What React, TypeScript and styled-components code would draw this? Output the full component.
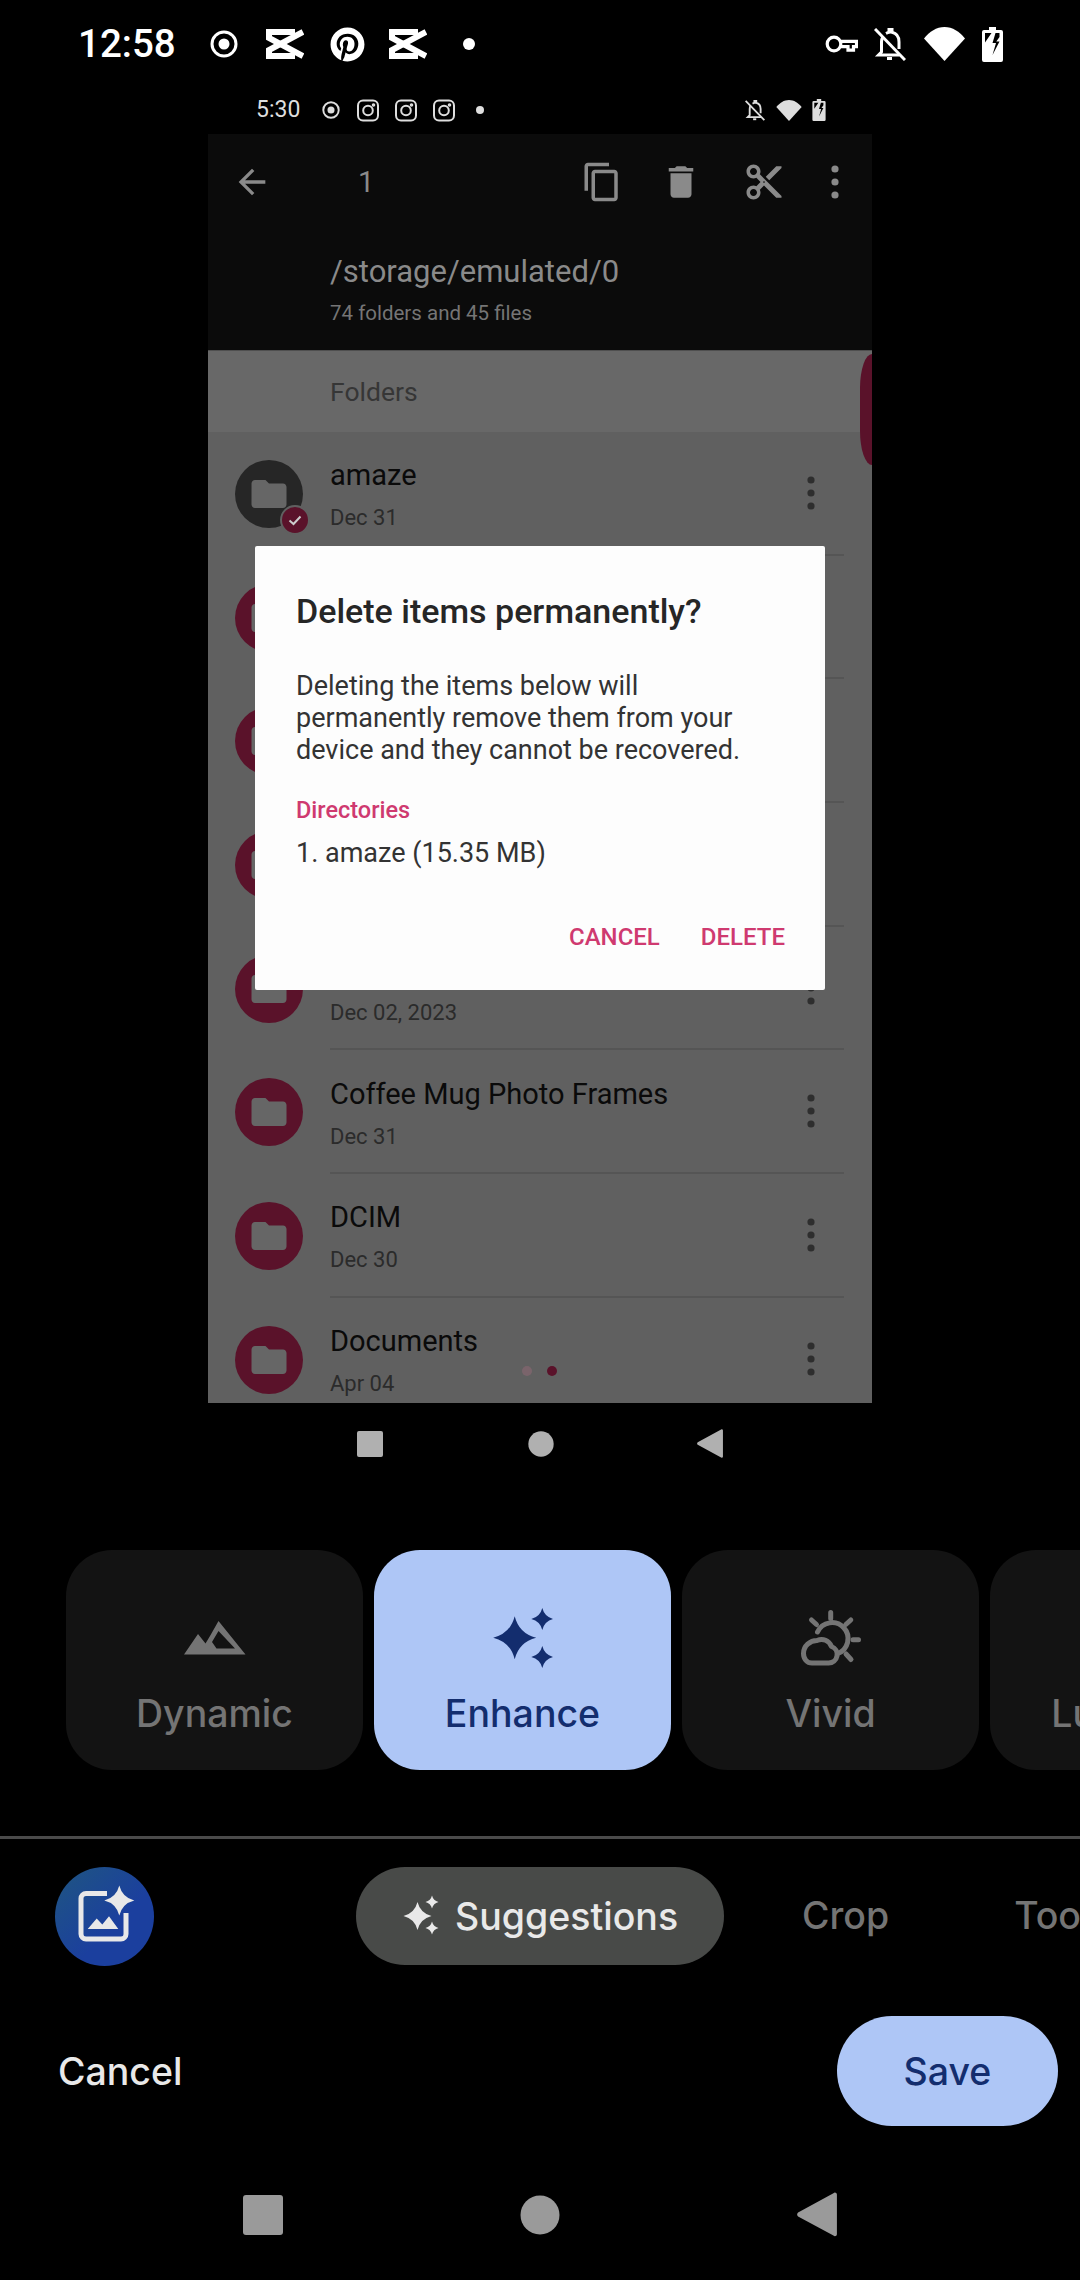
import React from 'react'
import styled, { createGlobalStyle } from 'styled-components'

const GlobalStyle = createGlobalStyle`
  html, body {
    margin: 0;
    padding: 0;
    background: #000;
    font-family: Roboto, "Liberation Sans", sans-serif;
  }
`

const Page = styled.div`
  width: 1080px;
  height: 2280px;
  background: #000;
  overflow: hidden;
  display: flex;
  flex-direction: column;
`

const StatusBar = styled.div`
  height: 88px;
  flex: none;
  display: flex;
  align-items: center;
  justify-content: space-between;
  padding: 0 77px 0 78px;
  color: #fff;
`
const StatusGroup = styled.div`
  display: flex;
  align-items: center;
`
const Clock = styled.span`
  font-size: 38.5px;
  font-weight: 500;
  line-height: 44px;
`
const Slot = styled.span<{ $ml?: number }>`
  display: flex;
  margin-left: ${p => p.$ml || 0}px;
`
const StatusDot = styled.span<{ $size: number; $ml: number }>`
  width: ${p => p.$size}px;
  height: ${p => p.$size}px;
  margin-left: ${p => p.$ml}px;
  border-radius: 50%;
  background: currentColor;
`

const Shot = styled.div`
  width: 664px;
  flex: none;
  margin: 0 auto;
`
const ShotStatus = styled.div`
  height: 46px;
  display: flex;
  align-items: center;
  justify-content: space-between;
  padding: 0 46px 2px 48px;
  box-sizing: border-box;
  color: #dedede;
`
const ShotClock = styled.span`
  font-size: 23px;
  line-height: 28px;
`
const Screen = styled.div`
  position: relative;
  height: 1269px;
  background: #606060;
  overflow: hidden;
`
const AppBar = styled.div`
  height: 217px;
  background: #0b0b0b;
  border-bottom: 1px solid #4f4f4f;
  box-sizing: border-box;
  color: #8a8a8a;
`
const ActionRow = styled.div`
  height: 96px;
  display: flex;
  align-items: center;
  padding-left: 24px;
`
const SelectCount = styled.span`
  font-size: 29px;
  margin-left: 86px;
  margin-right: 207px;
`
const PathText = styled.div`
  margin: 22px 0 0 122px;
  font-size: 31px;
  line-height: 40px;
`
const PathSub = styled.div`
  margin: 7px 0 0 122px;
  font-size: 20.5px;
  line-height: 28px;
  color: #757575;
`
const SectionHead = styled.div`
  height: 81px;
  display: flex;
  align-items: center;
  padding-left: 122px;
  background: #686868;
  font-size: 26.5px;
  color: #363636;
`
const Row = styled.div`
  height: 123.7px;
  display: flex;
  align-items: center;
  padding-left: 27px;
`
const FolderBadge = styled.div<{ $picked?: boolean }>`
  position: relative;
  width: 68px;
  height: 68px;
  flex: none;
  border-radius: 50%;
  display: flex;
  align-items: center;
  justify-content: center;
  background: ${p => (p.$picked ? '#262626' : '#5a122a')};
`
const CheckBadge = styled.span`
  position: absolute;
  right: -7px;
  bottom: -7px;
  width: 26px;
  height: 26px;
  border-radius: 50%;
  background: #5a122a;
  border: 2px solid #606060;
  display: flex;
  align-items: center;
  justify-content: center;
`
const RowBody = styled.div`
  flex: 1;
  height: 100%;
  margin: 0 28px 0 27px;
  display: flex;
  align-items: center;
  justify-content: space-between;
  padding-right: 21px;
  border-bottom: 2px solid #555;
  box-sizing: border-box;
`
const RowText = styled.div`
  padding-top: 3px;
`
const RowTitle = styled.div`
  height: 40px;
  line-height: 40px;
  font-size: 29px;
  color: #0a0a0a;
`
const RowDate = styled.div`
  margin-top: 8px;
  line-height: 30px;
  font-size: 22px;
  color: #2b2b2b;
`
const ScrollGrip = styled.div`
  position: absolute;
  top: 220px;
  right: 0;
  width: 12px;
  height: 111px;
  background: #5a122a;
  border-radius: 12px 0 0 12px / 34px 0 0 34px;
`
const PagerDots = styled.div`
  position: absolute;
  left: 314px;
  bottom: 27px;
  display: flex;
  gap: 15px;
`
const PagerDot = styled.span<{ $on?: boolean }>`
  width: 10px;
  height: 10px;
  border-radius: 50%;
  background: ${p => (p.$on ? '#5a122a' : '#7a646b')};
`

const Dialog = styled.div`
  position: absolute;
  top: 412px;
  left: 47px;
  width: 570px;
  height: 444px;
  background: #fdfdfd;
  border-radius: 2px;
  box-sizing: border-box;
  padding: 45px 40px 38px 41px;
  display: flex;
  flex-direction: column;
`
const DialogTitle = styled.div`
  font-size: 34px;
  font-weight: 500;
  line-height: 40px;
  color: #262626;
`
const DialogBody = styled.div`
  margin-top: 39px;
  font-size: 27px;
  line-height: 32px;
  color: #333;
`
const DialogLabel = styled.div`
  margin-top: 29px;
  font-size: 23.5px;
  font-weight: 500;
  line-height: 30px;
  color: #cf3a70;
`
const DialogItem = styled.div`
  margin-top: 10px;
  font-size: 27px;
  line-height: 36px;
  color: #333;
`
const DialogActions = styled.div`
  margin-top: auto;
  display: flex;
  justify-content: flex-end;
  gap: 41px;
`
const DialogButton = styled.span`
  font-size: 24px;
  font-weight: 500;
  line-height: 30px;
  color: #cf3a70;
`

const NavBar = styled.div<{ $height: number; $top?: number; $offset?: number }>`
  height: ${p => p.$height}px;
  margin-top: ${p => p.$top || 0}px;
  padding-top: ${p => p.$offset || 0}px;
  box-sizing: border-box;
  flex: none;
  display: flex;
  align-items: center;
  justify-content: center;
`

const CardRow = styled.div`
  margin-top: 67px;
  height: 220px;
  flex: none;
  display: flex;
  gap: 11px;
  padding-left: 66px;
  overflow: hidden;
`
const Card = styled.div<{ $on?: boolean }>`
  width: 297px;
  height: 220px;
  flex: none;
  border-radius: 46px;
  padding-top: 58px;
  box-sizing: border-box;
  display: flex;
  flex-direction: column;
  align-items: center;
  background: ${p => (p.$on ? '#aec6f6' : '#131313')};
  color: ${p => (p.$on ? '#132d6e' : '#747474')};
`
const CardIcon = styled.div`
  height: 60px;
  display: flex;
  align-items: center;
  justify-content: center;
`
const CardLabel = styled.div`
  margin-top: 22px;
  font-family: Inter, Roboto, sans-serif;
  font-size: 37.5px;
  font-weight: 500;
  line-height: 48px;
`

const Divider = styled.div`
  margin-top: 66px;
  height: 3px;
  flex: none;
  background: #4a4a4a;
`
const TabRow = styled.div`
  margin-top: 28px;
  height: 99px;
  flex: none;
  display: flex;
  align-items: flex-start;
  padding-left: 55px;
  overflow: hidden;
  white-space: nowrap;
  font-family: Inter, Roboto, sans-serif;
  font-weight: 500;
`
const MagicButton = styled.div`
  width: 99px;
  height: 99px;
  flex: none;
  border-radius: 50%;
  background: linear-gradient(135deg, #1f5680, #1b3f9e 60%);
  display: flex;
`
const ActiveTab = styled.div`
  margin-left: 202px;
  width: 368px;
  height: 98px;
  flex: none;
  box-sizing: border-box;
  padding-left: 47px;
  border-radius: 49px;
  background: #484a48;
  display: flex;
  align-items: center;
  gap: 14px;
  color: #e9e9e9;
  font-size: 37.5px;
`
const Tab = styled.div<{ $ml: number }>`
  margin-left: ${p => p.$ml}px;
  flex: none;
  height: 98px;
  line-height: 98px;
  font-size: 37.5px;
  color: #747474;
`
const FooterRow = styled.div`
  margin-top: 50px;
  height: 110px;
  flex: none;
  display: flex;
  align-items: center;
  justify-content: space-between;
  padding: 0 22px 0 58px;
  font-family: Inter, Roboto, sans-serif;
  font-size: 37.5px;
  font-weight: 500;
`
const CancelText = styled.span`
  color: #e9e9e9;
`
const SaveButton = styled.div`
  width: 221px;
  height: 110px;
  border-radius: 55px;
  background: #aec6f6;
  color: #132d6e;
  display: flex;
  align-items: center;
  justify-content: center;
`

// four pointed star centred on cx,cy
const star = (cx: number, cy: number, r: number) => {
  const k = r * 0.2
  return `M${cx} ${cy - r}Q${cx + k} ${cy - k} ${cx + r} ${cy}Q${cx + k} ${cy + k} ${cx} ${cy + r}Q${cx - k} ${cy + k} ${cx - r} ${cy}Q${cx - k} ${cy - k} ${cx} ${cy - r}Z`
}

const TargetIcon = ({ size }: { size: number }) => (
  <svg width={size} height={size} viewBox="0 0 28 28" fill="none">
    <circle cx="14" cy="14" r="12" stroke="currentColor" strokeWidth="3" />
    <circle cx="14" cy="14" r="5.5" fill="currentColor" />
  </svg>
)

const CapCutIcon = () => (
  <svg width="38" height="30" viewBox="0 0 38 30" fill="none" stroke="currentColor" strokeWidth="6">
    <path d="M37 3 3 21v6h26" />
    <path d="M37 27 3 9V3h26" />
  </svg>
)

const PinterestIcon = () => (
  <svg width="35" height="35" viewBox="0 0 496 512" fill="currentColor">
    <path d="M496 256c0 137-111 248-248 248-25.600 0-50.200-3.900-73.400-11.100 10.100-16.500 25.200-43.500 30.800-65 3-11.600 15.400-59 15.400-59 8.100 15.400 31.700 28.500 56.800 28.500 74.800 0 128.700-68.800 128.700-154.300 0-81.900-66.900-143.200-152.900-143.200-107 0-163.900 71.800-163.900 150.100 0 36.400 19.400 81.700 50.300 96.100 4.700 2.200 7.200 1.200 8.300-3.300.8-3.400 5-20.300 6.900-28.100.6-2.500.3-4.700-1.700-7.100-10.100-12.500-18.300-35.300-18.300-56.600 0-54.700 41.400-107.600 112-107.600 60.900 0 103.600 41.500 103.600 100.900 0 67.100-33.900 113.600-78 113.600-24.300 0-42.600-20.100-36.700-44.800 7-29.500 20.500-61.300 20.500-82.600 0-19-10.200-34.900-31.400-34.900-24.900 0-44.900 25.700-44.900 60.200 0 22 7.400 36.800 7.400 36.800s-24.500 103.800-29 123.200c-5 21.400-3 51.600-.9 71.200C65.400 450.900 0 361.100 0 256 0 119 111 8 248 8s248 111 248 248z" />
  </svg>
)

const InstaIcon = () => (
  <svg width="22" height="23" viewBox="0 0 22 23" fill="none" stroke="currentColor" strokeWidth="2">
    <rect x="1" y="1.500" width="20" height="20" rx="5" />
    <circle cx="11" cy="11.500" r="4.800" />
    <circle cx="16.500" cy="6" r="0.800" fill="currentColor" />
  </svg>
)

const KeyIcon = () => (
  <svg width="33" height="18" viewBox="0 0 33 18" fill="none" stroke="currentColor" strokeWidth="3.200">
    <circle cx="9" cy="9" r="6.800" />
    <path d="M16 6.300h15.500v5.400h-3v3.500h-5.500v-3.500h-7" />
  </svg>
)

const BellOffIcon = ({ width, height }: { width: number; height: number }) => (
  <svg width={width} height={height} viewBox="0 0 32 33" fill="none" stroke="currentColor" strokeWidth="3">
    <path d="M9 8.500c-1 1.500-1.500 3.400-1.500 5.500v10L4.500 27h21" />
    <path d="M12 5.500c1-.5 2-1 3-1.200V1h3v3.300c4.500 1 7 4.800 7 9.700v7" />
    <path d="M13 30.500h5" />
    <path d="M1 1l30 31" />
  </svg>
)

const WifiIcon = ({ width, height }: { width: number; height: number }) => (
  <svg width={width} height={height} viewBox="0 0 41 34" fill="currentColor">
    <path d="M20.500 34 0 11.500C5.500 4.500 12.500 0 20.500 0S35.500 4.500 41 11.500z" />
  </svg>
)

const BatteryIcon = ({ width, height }: { width: number; height: number }) => (
  <svg width={width} height={height} viewBox="0 0 21 35" fill="currentColor">
    <path
      fillRule="evenodd"
      d="M7 0h7v3h5a2 2 0 0 1 2 2v28a2 2 0 0 1-2 2H2a2 2 0 0 1-2-2V5a2 2 0 0 1 2-2h5zM3 6v9.500L9.500 6zM17.500 6h-4l-3 10H14l-3.500 12 7-13.500h-3.200l3.200-4.500z"
    />
  </svg>
)

const ToolIcon = ({ d, size = 40 }: { d: string; size?: number }) => (
  <svg width={size} height={size} viewBox="0 0 24 24" fill="currentColor">
    <path d={d} />
  </svg>
)

const FolderIcon = () => (
  <svg width="42" height="42" viewBox="0 0 24 24" fill="#666">
    <path d="M10 4H4c-1.100 0-1.990.9-1.990 2L2 18c0 1.100.9 2 2 2h16c1.100 0 2-.9 2-2V8c0-1.100-.9-2-2-2h-8l-2-2z" />
  </svg>
)

const DotsIcon = ({ color }: { color: string }) => (
  <svg width="24" height="36" viewBox="0 0 24 36" fill={color}>
    <circle cx="12" cy="5" r="3.600" />
    <circle cx="12" cy="18" r="3.600" />
    <circle cx="12" cy="31" r="3.600" />
  </svg>
)

const MountainIcon = () => (
  <svg width="62" height="34" viewBox="0 0 62 34" fill="currentColor">
    <path
      fillRule="evenodd"
      d="M0 33.500 14 13l7.500 9.500L26 15l8.500-15L61.500 33.500zM34.500 10 28 21l4.500 6.500H51z"
    />
  </svg>
)

const EnhanceIcon = () => (
  <svg width="60" height="60" viewBox="0 0 60 60" fill="currentColor">
    <path d={star(21.7, 29.7, 21.5)} />
    <path d={star(49.3, 11, 11)} />
    <path d={star(49.3, 49, 11)} />
  </svg>
)

const VividIcon = () => (
  <svg width="62" height="56" viewBox="0 0 62 56" fill="none" stroke="currentColor" strokeWidth="5" strokeLinecap="round">
    <path d="M17.500 22a16 16 0 1 1 20 21.700" />
    <path d="M12 53h16.500a8.500 8.500 0 0 0 3-16.500C29 30.500 23 28 17 30.500 10 30.500 3.500 36 3.500 43.500 3.500 49 7 53 12 53z" strokeLinejoin="round" />
    <path d="M30.700 2.500v6M11.500 10l5 4.500M50.800 10l-5 4.500M53 29.700h5.500M46 44l5 5.500" />
  </svg>
)

const MagicIcon = () => (
  <svg width="99" height="99" viewBox="0 0 99 99">
    <path
      d="M52 26.500H31a5 5 0 0 0-5 5V67a5 5 0 0 0 5 5h35a5 5 0 0 0 5-5V46"
      fill="none"
      stroke="#e8e8e8"
      strokeWidth="5"
    />
    <path d="M32.700 62 41.700 51.500 47.300 57.500 54 49.300 63.300 62z" fill="#e8e8e8" />
    <path d={star(64.300, 33.400, 15)} fill="#e8e8e8" />
  </svg>
)

const SparkIcon = () => (
  <svg width="38" height="44" viewBox="0 0 38 44" fill="currentColor">
    <path d={star(14.500, 22, 14)} />
    <path d={star(29, 8, 6.500)} />
    <path d={star(29, 34, 6.500)} />
  </svg>
)

const NavIcons = ({ fill, square, gap }: { fill: string; square: number; gap: number[] }) => (
  <>
    <svg width={square} height={square} viewBox="0 0 40 40" fill={fill}>
      <rect width="40" height="40" rx="3" />
    </svg>
    <Slot $ml={gap[0]}>
      <svg width={square} height={square} viewBox="0 0 40 40" fill={fill}>
        <circle cx="20" cy="20" r="19.500" />
      </svg>
    </Slot>
    <Slot $ml={gap[1]}>
      <svg width={square} height={square * 1.12} viewBox="0 0 40 45" fill={fill}>
        <path d="M38 .5c1 0 2 .7 2 2v40c0 1.300-1 2-2 2-.6 0-1.100-.3-1.500-.7L1 24.500c-1.300-1.200-1.300-2.800 0-4L36.500 1.200c.4-.4.900-.7 1.500-.7z" />
      </svg>
    </Slot>
  </>
)

const paths = {
  back: 'M20 11H7.830l5.590-5.590L12 4l-8 8 8 8 1.410-1.410L7.830 13H20v-2z',
  copy: 'M16 1H4c-1.100 0-2 .9-2 2v14h2V3h12V1zm3 4H8c-1.100 0-2 .9-2 2v14c0 1.100.9 2 2 2h11c1.100 0 2-.9 2-2V7c0-1.100-.9-2-2-2zm0 16H8V7h11v14z',
  trash: 'M6 19c0 1.100.9 2 2 2h8c1.100 0 2-.9 2-2V7H6v12zM19 4h-3.500l-1-1h-5l-1 1H5v2h14V4z',
  cut: 'M9.640 7.640c.23-.5.36-1.050.36-1.640 0-2.210-1.790-4-4-4S2 3.790 2 6s1.790 4 4 4c.59 0 1.140-.13 1.640-.36L10 12l-2.360 2.360C7.140 14.130 6.590 14 6 14c-2.210 0-4 1.790-4 4s1.790 4 4 4 4-1.790 4-4c0-.59-.13-1.140-.36-1.640L12 14l7 7h3v-1L9.640 7.640zM6 8c-1.100 0-2-.89-2-2s.9-2 2-2 2 .89 2 2-.9 2-2 2zm0 12c-1.100 0-2-.89-2-2s.9-2 2-2 2 .89 2 2-.9 2-2 2zm6-7.500c-.28 0-.5-.22-.5-.5s.22-.5.5-.5.5.22.5.5-.22.5-.5.5zM19 3l-6 6 2 2 7-7V3h-3z',
}

// rows two to five sit behind the dialog, so their titles never show
const folders = [
  { title: 'amaze', date: 'Dec 31', picked: true },
  { title: '', date: '' },
  { title: '', date: '' },
  { title: '', date: '' },
  { title: '', date: 'Dec 02, 2023' },
  { title: 'Coffee Mug Photo Frames', date: 'Dec 31' },
  { title: 'DCIM', date: 'Dec 30' },
  { title: 'Documents', date: 'Apr 04' },
]

const cards = [
  { label: 'Dynamic', icon: <MountainIcon /> },
  { label: 'Enhance', icon: <EnhanceIcon />, on: true },
  { label: 'Vivid', icon: <VividIcon /> },
  { label: 'Luminous', icon: null },
]

export default function App() {
  return (
    <Page>
      <GlobalStyle />
      <StatusBar>
        <StatusGroup>
          <Clock>12:58</Clock>
          <Slot $ml={34}><TargetIcon size={28} /></Slot>
          <Slot $ml={28}><CapCutIcon /></Slot>
          <Slot $ml={26}><PinterestIcon /></Slot>
          <Slot $ml={24}><CapCutIcon /></Slot>
          <StatusDot $size={12} $ml={36} />
        </StatusGroup>
        <StatusGroup>
          <KeyIcon />
          <Slot $ml={16}><BellOffIcon width={32} height={33} /></Slot>
          <Slot $ml={18}><WifiIcon width={41} height={34} /></Slot>
          <Slot $ml={17}><BatteryIcon width={21} height={35} /></Slot>
        </StatusGroup>
      </StatusBar>

      <Shot>
        <ShotStatus>
          <StatusGroup>
            <ShotClock>5:30</ShotClock>
            <Slot $ml={22}><TargetIcon size={18} /></Slot>
            <Slot $ml={17}><InstaIcon /></Slot>
            <Slot $ml={16}><InstaIcon /></Slot>
            <Slot $ml={16}><InstaIcon /></Slot>
            <StatusDot $size={8} $ml={21} />
          </StatusGroup>
          <StatusGroup>
            <BellOffIcon width={20} height={21} />
            <Slot $ml={11}><WifiIcon width={26} height={21} /></Slot>
            <Slot $ml={10}><BatteryIcon width={14} height={22} /></Slot>
          </StatusGroup>
        </ShotStatus>

        <Screen>
          <AppBar>
            <ActionRow>
              <ToolIcon d={paths.back} />
              <SelectCount>1</SelectCount>
              <ToolIcon d={paths.copy} size={42} />
              <Slot $ml={37}><ToolIcon d={paths.trash} size={42} /></Slot>
              <Slot $ml={41}><ToolIcon d={paths.cut} size={42} /></Slot>
              <Slot $ml={38}><DotsIcon color="#8a8a8a" /></Slot>
            </ActionRow>
            <PathText>/storage/emulated/0</PathText>
            <PathSub>74 folders and 45 files</PathSub>
          </AppBar>
          <SectionHead>Folders</SectionHead>
          {folders.map((folder, i) => (
            <Row key={i}>
              <FolderBadge $picked={folder.picked}>
                <FolderIcon />
                {folder.picked && (
                  <CheckBadge>
                    <svg width="16" height="16" viewBox="0 0 16 16" fill="none" stroke="#ccc" strokeWidth="2">
                      <path d="M2.500 8.500 6.500 12 13.500 4.500" />
                    </svg>
                  </CheckBadge>
                )}
              </FolderBadge>
              <RowBody>
                <RowText>
                  <RowTitle>{folder.title}</RowTitle>
                  <RowDate>{folder.date}</RowDate>
                </RowText>
                <DotsIcon color="#2e2e2e" />
              </RowBody>
            </Row>
          ))}
          <ScrollGrip />
          <PagerDots>
            <PagerDot />
            <PagerDot $on />
          </PagerDots>
          <Dialog>
            <DialogTitle>Delete items permanently?</DialogTitle>
            <DialogBody>
              Deleting the items below will
              <br />
              permanently remove them from your
              <br />
              device and they cannot be recovered.
            </DialogBody>
            <DialogLabel>Directories</DialogLabel>
            <DialogItem>1. amaze (15.35 MB)</DialogItem>
            <DialogActions>
              <DialogButton>CANCEL</DialogButton>
              <DialogButton>DELETE</DialogButton>
            </DialogActions>
          </Dialog>
        </Screen>

        <NavBar $height={80} $offset={2}>
          <NavIcons fill="#b0b0b0" square={26} gap={[145, 143]} />
        </NavBar>
      </Shot>

      <CardRow>
        {cards.map(card => (
          <Card key={card.label} $on={card.on}>
            <CardIcon>{card.icon}</CardIcon>
            <CardLabel>{card.label}</CardLabel>
          </Card>
        ))}
      </CardRow>

      <Divider />

      <TabRow>
        <MagicButton><MagicIcon /></MagicButton>
        <ActiveTab>
          <SparkIcon />
          Suggestions
        </ActiveTab>
        <Tab $ml={78}>Crop</Tab>
        <Tab $ml={125}>Tools</Tab>
      </TabRow>

      <FooterRow>
        <CancelText>Cancel</CancelText>
        <SaveButton>Save</SaveButton>
      </FooterRow>

      <NavBar $height={45} $top={66}>
        <NavIcons fill="#9a9a9a" square={40} gap={[237, 237]} />
      </NavBar>
    </Page>
  )
}
